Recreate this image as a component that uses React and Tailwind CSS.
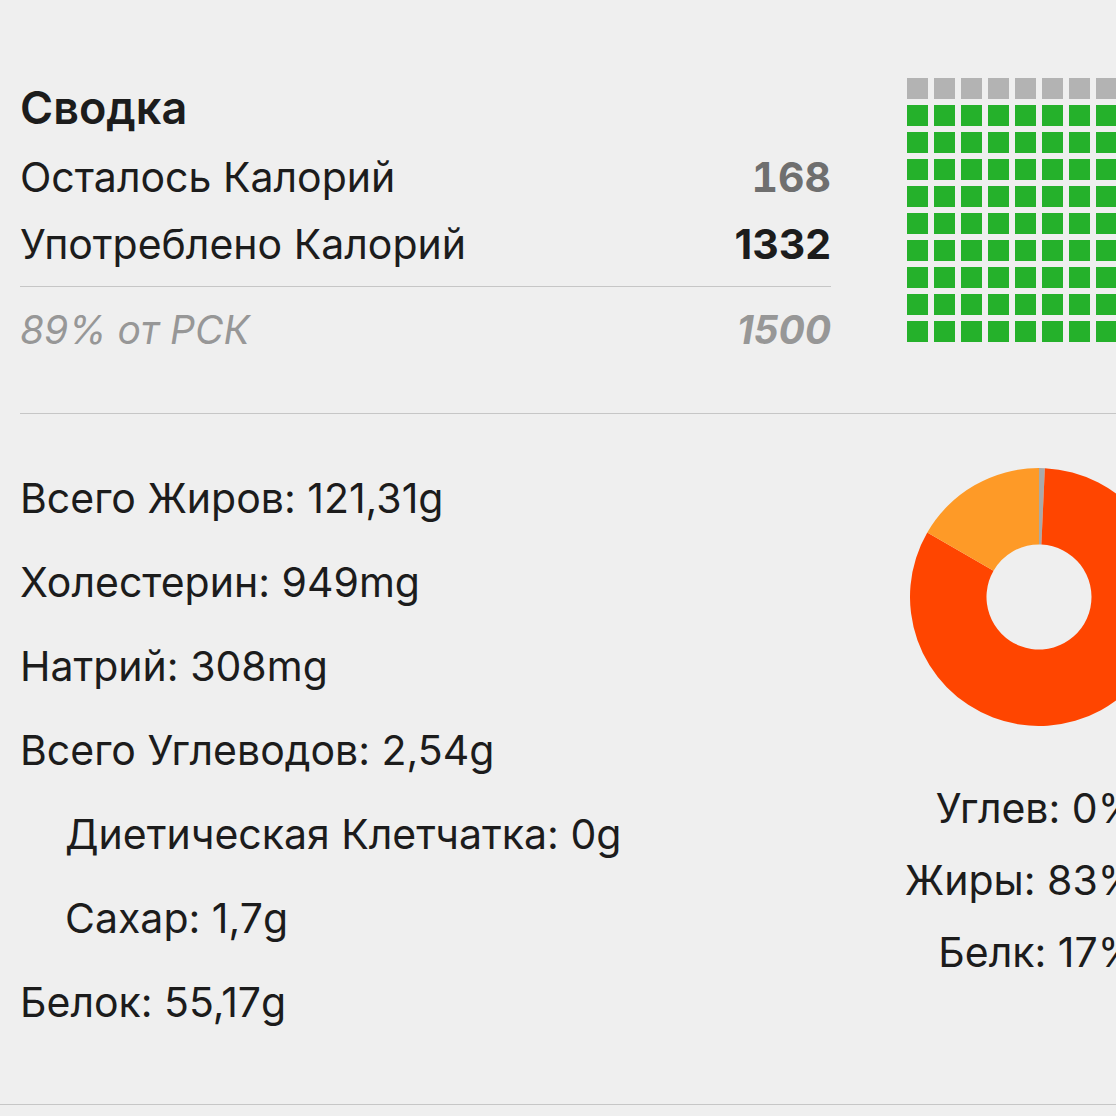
import React from "react";

const FONT = { fontFamily: "Inter, 'Noto Sans', sans-serif" };

function Grid() {
  const cells = [];
  for (let i = 0; i < 100; i++) {
    const gray = i < 10 || i === 19;
    cells.push(
      <div
        key={i}
        className={gray ? "w-[21px] h-[21px] bg-[#b3b3b3]" : "w-[21px] h-[21px] bg-[#25b12b]"}
      />
    );
  }
  return <div className="grid grid-cols-[repeat(10,21px)] gap-[6px]">{cells}</div>;
}

function polar(cx, cy, r, deg) {
  const a = ((deg - 90) * Math.PI) / 180;
  return [cx + r * Math.cos(a), cy + r * Math.sin(a)];
}

function arc(cx, cy, r0, r1, a0, a1) {
  const large = a1 - a0 > 180 ? 1 : 0;
  const [x0, y0] = polar(cx, cy, r1, a0);
  const [x1, y1] = polar(cx, cy, r1, a1);
  const [x2, y2] = polar(cx, cy, r0, a1);
  const [x3, y3] = polar(cx, cy, r0, a0);
  return `M${x0} ${y0} A${r1} ${r1} 0 ${large} 1 ${x1} ${y1} L${x2} ${y2} A${r0} ${r0} 0 ${large} 0 ${x3} ${y3} Z`;
}

function Donut() {
  const c = 129;
  return (
    <svg width="258" height="258" viewBox="0 0 258 258">
      <path d={arc(c, c, 52.5, 129, 0, 2.6)} fill="#a9a9a9" />
      <path d={arc(c, c, 52.5, 129, 2.6, 300)} fill="#ff4500" />
      <path d={arc(c, c, 52.5, 129, 300, 360)} fill="#fe9a27" />
    </svg>
  );
}

export default function App() {
  const nut = "h-[84px] flex items-center text-[41px] text-[#1c1c1c]";
  return (
    <div className="w-[1116px] h-[1116px] overflow-hidden bg-[#efefef]" style={FONT}>
      <div className="flex pl-[20px] pt-[78px]">
        <div className="w-[811px] shrink-0">
          <div className="h-[60px] flex items-center text-[45px] font-semibold text-[#1c1c1c]">Сводка</div>
          <div className="mt-[6px] h-[67px] flex items-center justify-between text-[41px] text-[#1c1c1c]">
            <span>Осталось Калорий</span>
            <span className="font-bold tabular-nums text-[#6f6f6f]">168</span>
          </div>
          <div className="h-[67px] flex items-center justify-between text-[41px] text-[#1c1c1c]">
            <span>Употреблено Калорий</span>
            <span className="font-bold">1332</span>
          </div>
          <div className="border-t border-[#c6c6c6] mt-[8px] h-[87px] flex items-center justify-between text-[39px] italic text-[#979797]">
            <span>89% от РСК</span>
            <span className="font-bold">1500</span>
          </div>
        </div>
        <div className="ml-[76px] shrink-0">
          <Grid />
        </div>
      </div>
      <div className="ml-[20px] mt-[40px] border-t border-[#c6c6c6]" />
      <div className="flex pl-[20px] pt-[43px]">
        <div className="w-[811px] shrink-0 flex flex-col">
          <div className={nut}>Всего Жиров: 121,31g</div>
          <div className={nut}>Холестерин: 949mg</div>
          <div className={nut}>Натрий: 308mg</div>
          <div className={nut}>Всего Углеводов: 2,54g</div>
          <div className={nut + " pl-[45px]"}>Диетическая Клетчатка: 0g</div>
          <div className={nut + " pl-[45px]"}>Сахар: 1,7g</div>
          <div className={nut}>Белок: 55,17g</div>
        </div>
        <div className="ml-[76px] w-[264px] shrink-0 flex flex-col items-center">
          <div className="mt-[11px]">
            <Donut />
          </div>
          <div className="self-stretch mt-[47px] pr-[33px] flex flex-col items-end text-[41px] text-[#1c1c1c]">
            <div className="h-[72px] flex items-center whitespace-nowrap">Углев: 0%</div>
            <div className="h-[72px] flex items-center whitespace-nowrap">Жиры: 83%</div>
            <div className="h-[72px] flex items-center whitespace-nowrap">Белк: 17%</div>
          </div>
        </div>
      </div>
      <div className="mt-[59px] border-t border-[#c6c6c6]" />
    </div>
  );
}
